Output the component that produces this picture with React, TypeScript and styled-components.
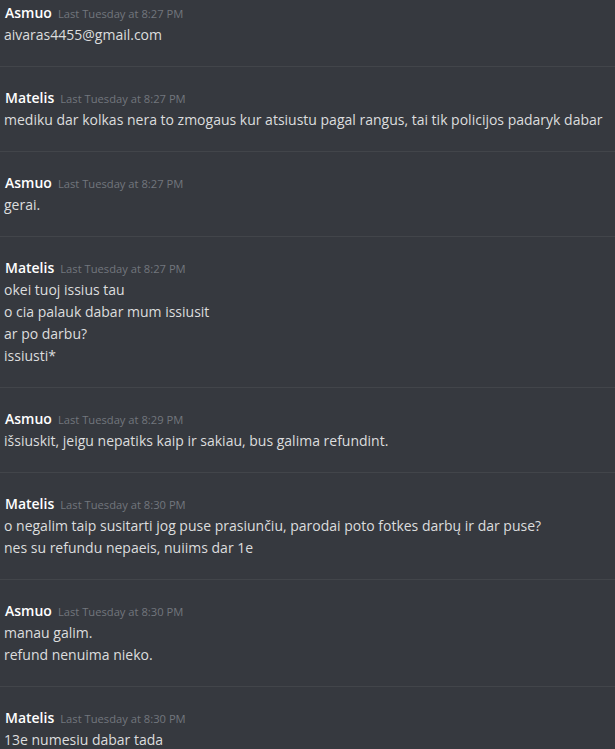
import styled, { createGlobalStyle } from "styled-components"

const GlobalStyle = createGlobalStyle`
  html, body {
    margin: 0;
    padding: 0;
    background: #36393f;
    overflow: hidden;
  }
`

const ChatLog = styled.div`
  width: 615px;
  height: 749px;
  overflow: hidden;
  background: #36393f;
  font-family: "Open Sans", "Noto Sans", sans-serif;
`

const MessageGroup = styled.div<{ $first?: boolean }>`
  padding: ${p => (p.$first ? "2px" : "20px")} 4px 20px 4px;
  border-bottom: 1px solid #42454a;
`

const Header = styled.div`
  display: flex;
  align-items: baseline;
  gap: 6px;
  height: 22px;
  line-height: 22px;
  padding-left: 1px;
`

const Username = styled.span`
  color: #ffffff;
  font-size: 14px;
  font-weight: 600;
`

const Timestamp = styled.span`
  color: #72767d;
  font-size: 11.2px;
`

const Line = styled.div`
  color: #dcddde;
  font-size: 14px;
  line-height: 22px;
  white-space: nowrap;
`

type Message = {
  author: string
  time: string
  lines: string[]
}

const messages: Message[] = [
  { author: "Asmuo", time: "Last Tuesday at 8:27 PM", lines: ["aivaras4455@gmail.com"] },
  {
    author: "Matelis",
    time: "Last Tuesday at 8:27 PM",
    lines: ["mediku dar kolkas nera to zmogaus kur atsiustu pagal rangus, tai tik policijos padaryk dabar"],
  },
  { author: "Asmuo", time: "Last Tuesday at 8:27 PM", lines: ["gerai."] },
  {
    author: "Matelis",
    time: "Last Tuesday at 8:27 PM",
    lines: ["okei tuoj issius tau", "o cia palauk dabar mum issiusit", "ar po darbu?", "issiusti*"],
  },
  {
    author: "Asmuo",
    time: "Last Tuesday at 8:29 PM",
    lines: ["išsiuskit, jeigu nepatiks kaip ir sakiau, bus galima refundint."],
  },
  {
    author: "Matelis",
    time: "Last Tuesday at 8:30 PM",
    lines: [
      "o negalim taip susitarti jog puse prasiunčiu, parodai poto fotkes darbų ir dar puse?",
      "nes su refundu nepaeis, nuiims dar 1e",
    ],
  },
  { author: "Asmuo", time: "Last Tuesday at 8:30 PM", lines: ["manau galim.", "refund nenuima nieko."] },
  { author: "Matelis", time: "Last Tuesday at 8:30 PM", lines: ["13e numesiu dabar tada"] },
]

const App = () => {
  return (
    <ChatLog>
      <GlobalStyle />
      {messages.map((msg, i) => (
        <MessageGroup key={i} $first={i === 0}>
          <Header>
            <Username>{msg.author}</Username>
            <Timestamp>{msg.time}</Timestamp>
          </Header>
          {msg.lines.map((line, j) => (
            <Line key={j}>{line}</Line>
          ))}
        </MessageGroup>
      ))}
    </ChatLog>
  )
}

export default App
